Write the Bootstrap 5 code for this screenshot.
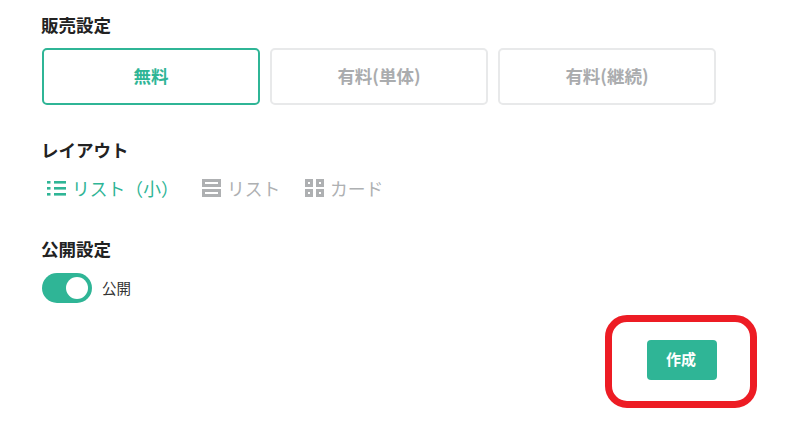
<!DOCTYPE html>
<html lang="ja">
<head>
<meta charset="utf-8">
<title>設定</title>
<link href="https://cdn.jsdelivr.net/npm/bootstrap@5.3.0/dist/css/bootstrap.min.css" rel="stylesheet">
<style>
html,body{height:442px;overflow:hidden;background:#fff}
body{font-family:"Noto Sans CJK JP","Noto Sans",sans-serif;color:#222}
.page-wrap{position:relative;width:798px;height:442px;padding:14px 0 0 42px}
.sec-title{font-size:17.5px;font-weight:700;line-height:22px;margin:0 0 0 -1px;color:#222}
.sale-row{margin-top:12px;gap:10px}
.sale-btn{width:218px;height:57px;border:2px solid #e8e9ea;border-radius:5px;background:#fff;color:#aaacae;font-size:17.5px;font-weight:700;padding:0}
.sale-btn.is-on{border-color:#2fb596;color:#2fb596}
.sec-layout{margin-top:34px}
.layout-row{margin-top:15px;height:24px;font-size:17.8px;line-height:24px;color:#aeb0b2;padding-left:5px}
.layout-opt{display:flex;align-items:center;gap:6px}
.layout-opt.is-on{color:#2fb596}
.opt-small{width:155px}
.opt-list{width:103px}
.sec-public{margin-top:38px}
.toggle-row{margin-top:13px;gap:10px;font-size:14.5px;color:#333}
.toggle-pill{width:50px;height:30px;border-radius:15px;background:#2fb596;display:flex;justify-content:flex-end;align-items:center;padding-right:4px}
.toggle-knob{width:22px;height:22px;border-radius:50%;background:#fff}
.action-row{margin-top:37px;width:675px}
.create-btn{width:70px;height:40px;background:#2fb596;border:0;border-radius:4px;color:#fff;font-size:15px;font-weight:700;padding:0 2px 2px 0}
.create-btn:hover{background:#2fb596;color:#fff}
.red-mark{position:absolute;left:605px;top:315px;width:152px;height:93px;border:7px solid #ed1c24;border-radius:22px;pointer-events:none}
</style>
</head>
<body>
<div class="page-wrap">
  <h2 class="sec-title">販売設定</h2>
  <div class="d-flex sale-row">
    <button type="button" class="btn sale-btn is-on">無料</button>
    <button type="button" class="btn sale-btn">有料(単体)</button>
    <button type="button" class="btn sale-btn">有料(継続)</button>
  </div>

  <h2 class="sec-title sec-layout">レイアウト</h2>
  <div class="d-flex layout-row">
    <div class="layout-opt is-on opt-small">
      <svg width="19" height="16" viewBox="0 0 19 16" fill="#2fb596"><rect x="0" y="1" width="3.5" height="2.6"/><rect x="7" y="1" width="12" height="2.6"/><rect x="0" y="7" width="3.5" height="2.6"/><rect x="7" y="7" width="12" height="2.6"/><rect x="0" y="13" width="3.5" height="2.6"/><rect x="7" y="13" width="12" height="2.6"/></svg>
      <span>リスト（小）</span>
    </div>
    <div class="layout-opt opt-list">
      <svg width="19" height="18" viewBox="0 0 19 18" fill="#aeb0b2"><path fill-rule="evenodd" d="M0 0h19v8H0zM3 3v2h13V3zM0 10h19v8H0zM3 13v2h13v-2z"/></svg>
      <span>リスト</span>
    </div>
    <div class="layout-opt">
      <svg width="19" height="18" viewBox="0 0 19 18" fill="#aeb0b2"><path fill-rule="evenodd" d="M0 0h8v8H0zM3 3v2h2V3zM11 0h8v8h-8zM14 3v2h2V3zM0 10h8v8H0zM3 13v2h2v-2zM11 10h8v8h-8zM14 13v2h2v-2z"/></svg>
      <span>カード</span>
    </div>
  </div>

  <h2 class="sec-title sec-public">公開設定</h2>
  <div class="d-flex align-items-center toggle-row">
    <div class="toggle-pill"><div class="toggle-knob"></div></div>
    <span>公開</span>
  </div>

  <div class="d-flex justify-content-end action-row">
    <button type="button" class="btn create-btn">作成</button>
  </div>
  <div class="red-mark"></div>
</div>
<script src="https://cdn.jsdelivr.net/npm/bootstrap@5.3.0/dist/js/bootstrap.bundle.min.js"></script>
</body>
</html>
